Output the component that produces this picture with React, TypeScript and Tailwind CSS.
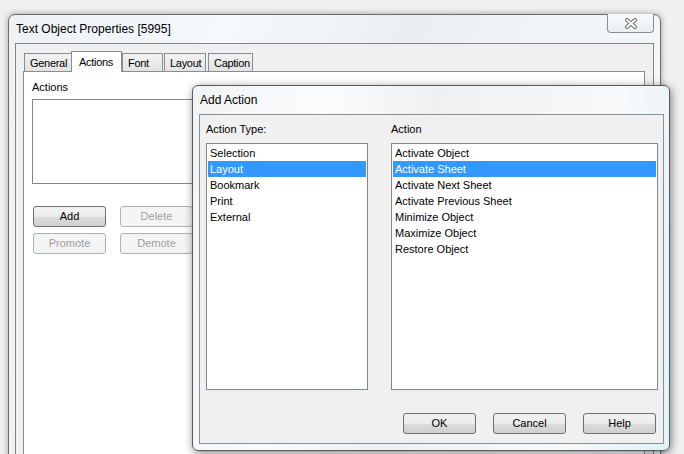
import React from 'react';

const actionTypes = ['Selection', 'Layout', 'Bookmark', 'Print', 'External'];
const actions = [
  'Activate Object',
  'Activate Sheet',
  'Activate Next Sheet',
  'Activate Previous Sheet',
  'Minimize Object',
  'Maximize Object',
  'Restore Object'
];

const WinButton = ({
  label,
  disabled = false,
  className = ''
}: {
  label: string;
  disabled?: boolean;
  className?: string;
}) => (
  <div
    className={`flex h-[21px] w-[73px] items-center justify-center rounded-[3px] border text-[11px] ${
      disabled
        ? 'border-[#adb2b5] bg-[#f4f4f4] text-[#a0a0a0]'
        : 'border-[#707070] bg-[linear-gradient(to_bottom,#f2f2f2_0%,#ebebeb_50%,#dddddd_50%,#cfcfcf_100%)] text-black'
    } ${className}`}>
    {label}
  </div>
);

const ListBox = ({
  items,
  selected,
  className = ''
}: {
  items: string[];
  selected: number;
  className?: string;
}) => (
  <div className={`border border-[#828790] bg-white pt-[1px] ${className}`}>
    {items.map((item, i) => (
      <div
        key={item}
        className={`mx-[1px] flex h-[16px] items-center px-[2px] text-[11px] leading-none ${
          i === selected ? 'bg-[#3399ff] text-white' : 'text-black'
        }`}>
        {item}
      </div>
    ))}
  </div>
);

const Tab = ({ label, active = false, width, className = '' }: { label: string; active?: boolean; width: string; className?: string }) => (
  <div
    className={`flex items-center border border-b-0 border-[#898c95] pl-[5px] text-[11px] tracking-[-0.3px] ${
      active
        ? 'relative z-10 h-[21px] bg-white pl-[7px] pt-[1px]'
        : 'mb-[1px] h-[18px] bg-[linear-gradient(to_bottom,#f2f2f2,#e3e3e3)] pt-[2px]'
    } ${width} ${className}`}>
    {label}
  </div>
);

const CloseGlyph = () => (
  <svg width="14" height="11" viewBox="0 0 14 11">
    <path d="M3 2 L11 9 M11 2 L3 9" stroke="#6e6e6e" strokeWidth="4" strokeLinecap="round" fill="none" />
    <path d="M3 2 L11 9 M11 2 L3 9" stroke="#ffffff" strokeWidth="2" strokeLinecap="round" fill="none" />
  </svg>
);

export default function App() {
  return (
    <div className="relative h-[454px] w-[684px] overflow-hidden bg-[#f0f0f0] font-['Liberation_Sans','Arial',sans-serif] text-black">
      {/* main properties window */}
      <div className="absolute left-[8px] top-[14px] h-[460px] w-[653px] rounded-t-[7px] border border-[#6b6b6b] bg-[linear-gradient(100deg,#eef1f4_0%,#f6f9fb_30%,#eceff1_55%,#f4fbfd_100%)] shadow-[0_0_6px_rgba(0,0,0,0.35)]">
        <div className="relative flex h-[28px] items-center pl-[7px] text-[12px]">
          Text Object Properties [5995]
          <div className="absolute right-[6px] top-[-1px] flex h-[19px] w-[47px] items-center justify-center rounded-b-[4px] border border-t-0 border-[#8d8d8d] bg-[linear-gradient(to_bottom,#f7fafb,#e9eef1)]">
            <CloseGlyph />
          </div>
        </div>
        <div className="ml-[6px] h-[420px] w-[639px] border border-[#838383] bg-[#f0f0f0] pl-[7px] pr-[8px] pt-[7px]">
          <div className="relative z-10 mb-[-1px] flex items-end pl-[1px]">
            <Tab label="General" width="w-[48px]" />
            <Tab label="Actions" active width="w-[51px]" className="ml-[-1px]" />
            <Tab label="Font" width="w-[41px]" />
            <Tab label="Layout" width="w-[42px]" className="ml-[1px]" />
            <Tab label="Caption" width="w-[45px]" className="ml-[2px]" />
          </div>
          <div className="h-[400px] border border-[#898c95] bg-white pl-[8px] pr-[8px] pt-[8px]">
            <div className="mb-[5px] h-[14px] text-[11px] leading-[14px]">Actions</div>
            <div className="h-[85px] border border-[#828790] bg-white" />
            <div className="mt-[22px] flex flex-col gap-[6px] pl-[1px]">
              <div className="flex gap-[14px]">
                <WinButton label="Add" />
                <WinButton label="Delete" disabled />
              </div>
              <div className="flex gap-[14px]">
                <WinButton label="Promote" disabled />
                <WinButton label="Demote" disabled />
              </div>
            </div>
          </div>
        </div>
      </div>

      {/* Add Action dialog */}
      <div className="absolute left-[192px] top-[85px] h-[366px] w-[478px] rounded-[6px] border border-[#5a5a5a] bg-[linear-gradient(100deg,#f1f3f5_0%,#fafcfd_25%,#eef0f2_45%,#f7f9fa_80%,#dff2fa_100%)] shadow-[1px_2px_8px_rgba(0,0,0,0.5)]">
        <div className="flex h-[28px] items-center pl-[7px] text-[12px]">Add Action</div>
        <div className="ml-[6px] flex h-[330px] w-[465px] flex-col border border-[#8e8f8f] bg-[#f0f0f0] pl-[6px] pr-[6px] pt-[7px]">
          <div className="grid grid-cols-[162px_267px] gap-x-[23px]">
            <div className="mb-[7px] h-[14px] text-[11px] leading-[14px]">Action Type:</div>
            <div className="mb-[7px] h-[14px] text-[11px] leading-[14px]">Action</div>
            <ListBox items={actionTypes} selected={1} className="h-[247px]" />
            <ListBox items={actions} selected={1} className="h-[247px]" />
          </div>
          <div className="mt-[23px] flex justify-end gap-[17px] pr-[1px]">
            <WinButton label="OK" />
            <WinButton label="Cancel" />
            <WinButton label="Help" />
          </div>
        </div>
      </div>
    </div>
  );
}
